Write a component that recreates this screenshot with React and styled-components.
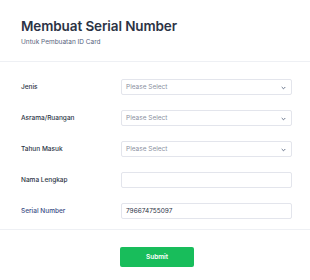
import React from 'react'
import styled, { createGlobalStyle } from 'styled-components';

const GlobalStyle = createGlobalStyle`
  html, body {
    margin: 0;
    padding: 0;
    background: #fff;
    font-family: Inter, "Noto Sans", sans-serif;
  }
  * { box-sizing: border-box; }
`;

const Page = styled.div`
  width: 310px;
  height: 280px;
  background: #fff;
  overflow: hidden;
`;

const Header = styled.div`
  padding: 17px 21px 0;
  height: 62px;
  border-bottom: 1px solid #eef0f4;
`;

const Title = styled.h1`
  margin: 0;
  font-size: 13.5px;
  line-height: 18px;
  font-weight: 600;
  color: #2c3345;
  letter-spacing: -0.1px;
`;

const Subtitle = styled.div`
  margin-top: 3px;
  font-size: 6.5px;
  line-height: 9px;
  color: #57647e;
`;

const Form = styled.div`
  display: flex;
  flex-direction: column;
  gap: 15px;
  padding: 17px 18px 10px 21px;
  border-bottom: 1px solid #eef0f4;
`;

const Row = styled.div`
  display: grid;
  grid-template-columns: 100px 171px;
  align-items: center;
  height: 16px;
`;

const Label = styled.label`
  font-size: 6.5px;
  font-weight: 500;
  color: ${p => p.$blue ? '#3a4d85' : '#2c3345'};
`;

const Field = styled.div`
  position: relative;
  height: 16px;
  border: 1px solid #e3e5ec;
  border-radius: 2px;
  background: #fff;
  display: flex;
  align-items: center;
  padding: 0 4px;
  font-size: 6.5px;
  color: ${p => p.$filled ? '#2c3345' : '#8b90a0'};
`;

const Chevron = styled.svg`
  position: absolute;
  right: 5px;
  top: 6px;
`;

const Footer = styled.div`
  padding: 13px 0 0 120px;
`;

const Button = styled.button`
  width: 74px;
  height: 20px;
  border: none;
  border-radius: 2px;
  background: #18bd5b;
  color: #fff;
  font-family: Inter, sans-serif;
  font-size: 6.5px;
  font-weight: 600;
  cursor: pointer;
`;

const SelectField = ({ text }) => (
  <Field>
    {text}
    <Chevron width="5" height="4" viewBox="0 0 5 4">
      <path d="M0.7 1 L2.5 2.8 L4.3 1" fill="none" stroke="#57647e" strokeWidth="0.9" />
    </Chevron>
  </Field>
)

const App = () => {
  return (
    <>
      <GlobalStyle />
      <Page>
        <Header>
          <Title>Membuat Serial Number</Title>
          <Subtitle>Untuk Pembuatan ID Card</Subtitle>
        </Header>
        <Form>
          <Row>
            <Label>Jenis</Label>
            <SelectField text="Please Select" />
          </Row>
          <Row>
            <Label>Asrama/Ruangan</Label>
            <SelectField text="Please Select" />
          </Row>
          <Row>
            <Label>Tahun Masuk</Label>
            <SelectField text="Please Select" />
          </Row>
          <Row>
            <Label>Nama Lengkap</Label>
            <Field $filled></Field>
          </Row>
          <Row>
            <Label $blue>Serial Number</Label>
            <Field $filled>796674755097</Field>
          </Row>
        </Form>
        <Footer>
          <Button>Submit</Button>
        </Footer>
      </Page>
    </>
  )
}

export default App;
